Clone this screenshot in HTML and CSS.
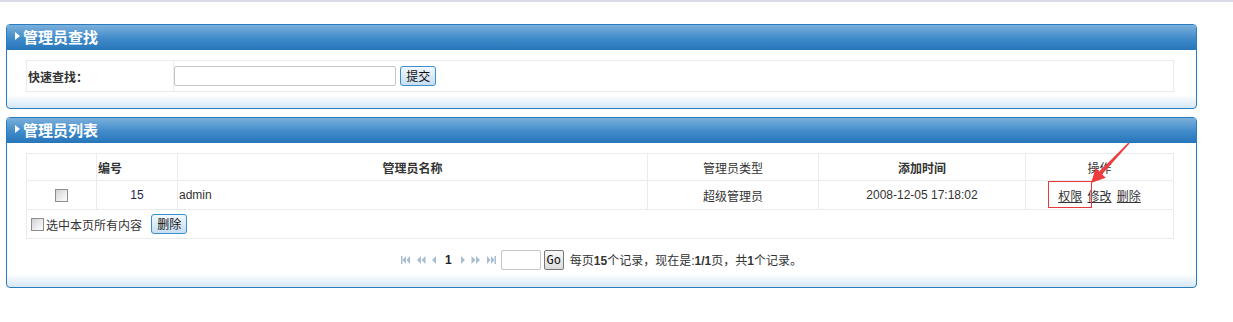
FILE: index.html
```html
<!DOCTYPE html>
<html lang="zh-CN">
<head>
    <meta charset="UTF-8">
    <title>管理员管理</title>
    <link rel="stylesheet" href="styles.css">
</head>
<body>
    <div class="topline"></div>
    <div class="page">
        <div class="panel">
            <div class="panel-head"><span class="tri"></span>管理员查找</div>
            <div class="panel-body">
                <table class="grid search">
                    <tr>
                        <td class="label">快速查找：</td>
                        <td class="field"><input type="text" class="txt"> <button class="btn">提交</button></td>
                    </tr>
                </table>
            </div>
        </div>

        <div class="panel">
            <div class="panel-head"><span class="tri"></span>管理员列表</div>
            <div class="panel-body list-body">
                <table class="grid list">
                    <tr class="head">
                        <td class="c1"></td>
                        <td class="c2 b left">编号</td>
                        <td class="c3 b">管理员名称</td>
                        <td class="c4">管理员类型</td>
                        <td class="c5 b">添加时间</td>
                        <td class="c6">操作</td>
                    </tr>
                    <tr>
                        <td><input type="checkbox" class="chk"></td>
                        <td class="num">15</td>
                        <td class="left">admin</td>
                        <td>超级管理员</td>
                        <td>2008-12-05 17:18:02</td>
                        <td class="ops"><a href="#">权限</a> <a href="#">修改</a> <a href="#">删除</a></td>
                    </tr>
                    <tr>
                        <td colspan="6" class="left foot">
                            <label class="all"><input type="checkbox" class="chk">选中本页所有内容</label>
                            <button class="btn">删除</button>
                        </td>
                    </tr>
                </table>

                <div class="pager">
                    <svg class="pg" width="10" height="8" viewBox="0 0 10 8"><rect x="0" y="0" width="1.5" height="8"/><path d="M5 0 L1.5 4 L5 8Z M9 0 L5.5 4 L9 8Z"/></svg>
                    <svg class="pg" width="9" height="8" viewBox="0 0 9 8"><path d="M4 0 L0 4 L4 8Z M8.5 0 L4.5 4 L8.5 8Z"/></svg>
                    <svg class="pg" width="5" height="8" viewBox="0 0 5 8"><path d="M4 0 L0 4 L4 8Z"/></svg>
                    <b class="cur">1</b>
                    <svg class="pg" width="5" height="8" viewBox="0 0 5 8"><path d="M1 0 L5 4 L1 8Z"/></svg>
                    <svg class="pg" width="9" height="8" viewBox="0 0 9 8"><path d="M0.5 0 L4.5 4 L0.5 8Z M5 0 L9 4 L5 8Z"/></svg>
                    <svg class="pg" width="10" height="8" viewBox="0 0 10 8"><path d="M1 0 L4.5 4 L1 8Z M5 0 L8.5 4 L5 8Z"/><rect x="8.5" y="0" width="1.5" height="8"/></svg>
                    <input type="text" class="pgtxt">
                    <button class="gobtn">Go</button>
                    <span class="info">每页<b>15</b>个记录，现在是:<b>1/1</b>页，共<b>1</b>个记录。</span>
                </div>
            </div>
        </div>
    </div>

    <!-- annotation -->
    <div class="mark"></div>
    <svg class="arrow" width="50" height="50" viewBox="0 0 50 50">
        <polygon points="5,43 19.7,37.7 16.1,34.3 43.5,3.5 42.5,2.5 13.3,31.5 9.7,28.1"/>
    </svg>
</body>
</html>
```

FILE: styles.css
```css
body {
    margin: 0;
    font-family: "Liberation Sans", "Noto Sans CJK SC", sans-serif;
    font-size: 12px;
    color: #333;
    background: #fff;
}

.topline {
    height: 2px;
    background: #d9dbe6;
}

.page {
    padding: 22px 36px 0 6px;
}

.panel {
    border: 1px solid #2a7cc0;
    border-radius: 4px;
    margin-bottom: 8px;
    background: linear-gradient(to bottom, #fff calc(100% - 13px), #d4e7f6);
}

.panel-head {
    height: 22px;
    padding: 0 0 3px 8px;
    display: flex;
    align-items: center;
    color: #fff;
    font-size: 15px;
    font-weight: bold;
    border-radius: 3px 3px 0 0;
    background: linear-gradient(to bottom, #7bb0dc, #3f8ac9 55%, #2776ba);
}

.tri {
    width: 0;
    height: 0;
    border-top: 4px solid transparent;
    border-bottom: 4px solid transparent;
    border-left: 5px solid #fff;
    margin-right: 3px;
}

.panel-body {
    padding: 10px 22px 16px 19px;
}

.list-body {
    padding-bottom: 17px;
}

.grid {
    width: 100%;
    border-collapse: collapse;
}

.grid td {
    border: 1px solid #ebebeb;
    padding: 0;
    text-align: center;
}

.search td {
    height: 30px;
    text-align: left;
}

.search .label {
    width: 145px;
    padding-left: 1px;
    font-weight: bold;
}

.txt {
    width: 218px;
    height: 16px;
    border: 1px solid #c5c5c5;
    border-radius: 2px;
    padding: 1px;
    margin: 0;
    vertical-align: middle;
}

.btn {
    font-family: "Noto Sans CJK SC", sans-serif;
    font-size: 12px;
    height: 20px;
    padding: 0 5px;
    margin-left: 1px;
    line-height: 16px;
    border: 1px solid #3a8fcf;
    border-radius: 3px;
    background: linear-gradient(to bottom, #f2f7fc, #c7def2);
    color: #111;
    vertical-align: middle;
}

.list {
    table-layout: fixed;
}

.list td {
    height: 28px;
}

.list .head td {
    height: 26px;
}

.list .c1 { width: 69px; }
.list .c2 { width: 79px; }
.list .c3 { width: 469px; }
.list .c4 { width: 170px; }
.list .c5 { width: 206px; }

.b {
    font-weight: bold;
}

.list td.left {
    text-align: left;
    padding-left: 1px;
}

.num {
    color: #2c2450;
}

.chk {
    appearance: none;
    -webkit-appearance: none;
    width: 13px;
    height: 13px;
    margin: 0;
    border: 1px solid #8d8d8d;
    background: linear-gradient(135deg, #d2d2d2, #f7f7f7 80%);
    vertical-align: middle;
}

.ops a {
    color: #333;
    margin: 0 1px;
}

.list td.foot {
    padding-left: 4px;
}

.all {
    display: inline-flex;
    align-items: center;
    gap: 2px;
    vertical-align: middle;
    margin-right: 5px;
}

.pager {
    display: flex;
    justify-content: center;
    align-items: center;
    margin-top: 10px;
    height: 21px;
}

.pg {
    fill: #a9bdd0;
    margin: 0 3px;
}

.cur {
    margin: 0 5px;
    color: #222;
}

.pgtxt {
    width: 36px;
    height: 16px;
    margin: 0 3px 0 2px;
    padding: 1px;
    border: 1px solid #c5c5c5;
    border-radius: 2px;
}

.gobtn {
    font-family: "DejaVu Sans Mono", monospace;
    font-size: 12px;
    width: 20px;
    height: 20px;
    padding: 0;
    border: 1px solid #777;
    border-radius: 2px;
    background: linear-gradient(to bottom, #f8f8f8, #dcdcdc);
    color: #111;
}

.info {
    margin-left: 6px;
}

.mark {
    position: absolute;
    left: 1048px;
    top: 181px;
    width: 42px;
    height: 25px;
    border: 1px solid #e8393c;
}

.arrow {
    position: absolute;
    left: 1086px;
    top: 140px;
    fill: #ee3b3d;
}
```
